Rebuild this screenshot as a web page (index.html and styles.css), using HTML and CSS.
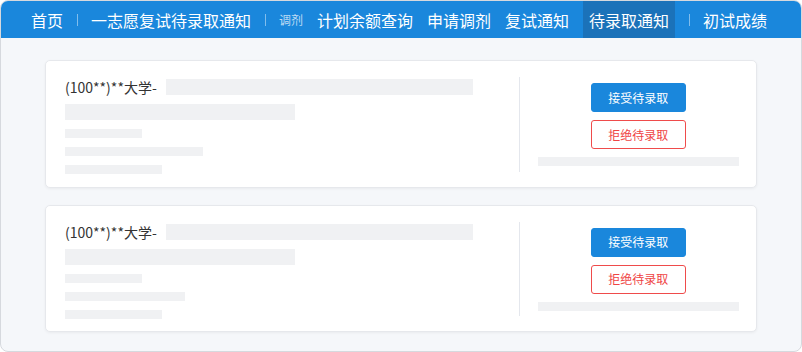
FILE: index.html
```html
<!DOCTYPE html>
<html lang="zh-CN">
<head>
<meta charset="utf-8">
<title>待录取通知</title>
<link rel="stylesheet" href="styles.css">
</head>
<body>
<div class="frame">
  <nav class="nav">
    <span class="nav-item">首页</span>
    <span class="sep"></span>
    <span class="nav-item">一志愿复试待录取通知</span>
    <span class="sep"></span>
    <span class="nav-item nav-small">调剂</span>
    <span class="nav-item">计划余额查询</span>
    <span class="nav-item">申请调剂</span>
    <span class="nav-item">复试通知</span>
    <span class="nav-item nav-active">待录取通知</span>
    <span class="sep"></span>
    <span class="nav-item">初试成绩</span>
  </nav>
  <main class="main">
    <section class="card">
      <div class="info">
        <div class="title-row"><span class="school">(100**)**大学-</span><span class="bar bar-title"></span></div>
        <span class="bar bar-l2"></span>
        <span class="bar bar-s bar-w77"></span>
        <span class="bar bar-s bar-w138"></span>
        <span class="bar bar-s bar-w97"></span>
      </div>
      <div class="actions">
        <button class="btn btn-accept">接受待录取</button>
        <button class="btn btn-reject">拒绝待录取</button>
        <span class="bar bar-s bar-action"></span>
      </div>
    </section>
    <section class="card">
      <div class="info">
        <div class="title-row"><span class="school">(100**)**大学-</span><span class="bar bar-title"></span></div>
        <span class="bar bar-l2"></span>
        <span class="bar bar-s bar-w77"></span>
        <span class="bar bar-s bar-w120"></span>
        <span class="bar bar-s bar-w97"></span>
      </div>
      <div class="actions">
        <button class="btn btn-accept">接受待录取</button>
        <button class="btn btn-reject">拒绝待录取</button>
        <span class="bar bar-s bar-action"></span>
      </div>
    </section>
  </main>
</div>
</body>
</html>
```

FILE: styles.css
```css
* { box-sizing: border-box; }
html, body {
  margin: 0;
  padding: 0;
  background: #ffffff;
}
body {
  font-family: "Noto Sans CJK SC", "Noto Sans", sans-serif;
  width: 802px;
  height: 352px;
  overflow: hidden;
}
.frame {
  width: 802px;
  height: 352px;
  border: 1px solid #d6d9de;
  border-radius: 8px;
  overflow: hidden;
  background: #f5f7fa;
  display: flex;
  flex-direction: column;
}
.nav {
  height: 37px;
  flex: none;
  background: #1a87dc;
  display: flex;
  align-items: stretch;
  padding-left: 23px;
}
.nav-item {
  display: flex;
  align-items: center;
  padding: 0 7px;
  color: #ffffff;
  font-size: 16px;
  line-height: 1;
  white-space: nowrap;
}
.nav-small {
  font-size: 12px;
  color: rgba(255, 255, 255, 0.72);
  padding-top: 1px;
}
.nav-active {
  background: #1b72b9;
  padding: 0 6px;
  margin: 0 7px;
}
.sep {
  width: 1px;
  height: 12px;
  align-self: center;
  margin: 1px 6px 0 7px;
  background: rgba(255, 255, 255, 0.45);
}
.main {
  flex: 1;
  padding: 22px 44px 0;
  display: flex;
  flex-direction: column;
  gap: 17px;
}
.card {
  background: #ffffff;
  border: 1px solid #e6e8ec;
  border-radius: 5px;
  box-shadow: 0 1px 3px rgba(0, 0, 0, 0.05);
  display: grid;
  grid-template-columns: 2fr 1fr;
  height: 128px;
}
.card + .card { height: 127px; }
.info {
  min-width: 0;
  padding: 18px 20px 0 19px;
  display: flex;
  flex-direction: column;
  align-items: flex-start;
  gap: 9px;
}
.title-row {
  display: flex;
  align-items: center;
  height: 16px;
}
.school {
  font-size: 14px;
  color: #333333;
  line-height: 16px;
  margin-right: 9px;
  white-space: nowrap;
}
.bar {
  display: block;
  background: #f0f1f3;
  height: 16px;
}
.bar-title { width: 307px; }
.bar-l2 { width: 230px; }
.bar-s { height: 9px; }
.bar-w77 { width: 77px; }
.bar-w138 { width: 138px; }
.bar-w120 { width: 120px; }
.bar-w97 { width: 97px; }
.actions {
  min-width: 0;
  margin: 16px 0 15px;
  border-left: 1px solid #e4e7ed;
  display: flex;
  flex-direction: column;
  align-items: center;
  justify-content: center;
  gap: 8px;
}
.btn {
  width: 95px;
  height: 29px;
  border-radius: 3px;
  font-family: "Noto Sans CJK SC", "Noto Sans", sans-serif;
  font-size: 12px;
  line-height: 1;
  padding: 0;
  cursor: pointer;
}
.btn-accept {
  background: #1a87dc;
  border: 1px solid #1a87dc;
  color: #ffffff;
}
.btn-reject {
  background: #ffffff;
  border: 1px solid #ef4b4b;
  color: #ef4444;
}
.bar-action { width: 201px; }
```
